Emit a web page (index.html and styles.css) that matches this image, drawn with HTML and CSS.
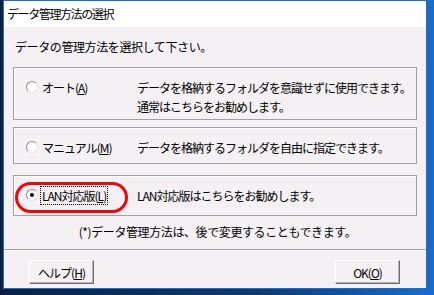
FILE: index.html
```html
<!DOCTYPE html>
<html lang="ja">
<head>
	<meta charset="UTF-8">
	<title>データ管理方法の選択</title>
	<link rel="stylesheet" href="styles.css">
</head>
<body>
	<div class="dialog">
		<header class="titlebar">データ管理方法の選択</header>
		<main class="content">
			<p class="prompt">データの管理方法を選択して下さい。</p>
			<div class="group group-auto">
				<div class="opt">
					<span class="radio"></span>
					<span class="label">オート(<u>A</u>)</span>
					<span class="desc">データを格納するフォルダを意識せずに使用できます。<br>通常はこちらをお勧めします。</span>
				</div>
			</div>
			<div class="group group-manual">
				<div class="opt">
					<span class="radio"></span>
					<span class="label">マニュアル(<u>M</u>)</span>
					<span class="desc">データを格納するフォルダを自由に指定できます。</span>
				</div>
			</div>
			<div class="group group-lan">
				<div class="opt">
					<span class="radio checked"></span>
					<span class="label"><span class="focus">LAN対応版(<u>L</u>)</span></span>
					<span class="desc">LAN対応版はこちらをお勧めします。</span>
				</div>
				<div class="mark"></div>
			</div>
			<p class="note">(*)データ管理方法は、後で変更することもできます。</p>
		</main>
		<footer class="buttons">
			<button type="button" class="btn">ヘルプ(<u>H</u>)</button>
			<button type="button" class="btn">OK(<u>O</u>)</button>
		</footer>
	</div>
</body>
</html>
```

FILE: styles.css
```css
body {
	margin: 0;
	height: 295px;
	display: flex;
	align-items: flex-start;
	padding-left: 3px;
	background: linear-gradient(to right, #0a2240 0%, #0f3a6e 60%, #1a6ccc 100%);
	font-family: "Noto Sans CJK JP", sans-serif;
	font-size: 12px;
	letter-spacing: -1px;
	color: #000;
}

.dialog {
	width: 424px;
	height: 289px;
	box-sizing: border-box;
	border: 1px solid #1f6fc4;
	display: flex;
	flex-direction: column;
	background: #f4f0f4;
}

.titlebar {
	height: 26px;
	line-height: 26px;
	padding-left: 3px;
	background: #fff;
	letter-spacing: -1.4px;
}

.content {
	height: 222px;
	box-sizing: border-box;
	padding: 12px 9px 0 9px;
}

.prompt {
	margin: 0 0 12px 2px;
	line-height: 16px;
	letter-spacing: -0.4px;
}

.group {
	position: relative;
	box-sizing: border-box;
	border: 1px solid #a0a0a0;
	box-shadow: inset 1px 1px #fff;
	padding: 10px 0 0 12px;
}

.group-auto {height: 53px;}
.group-manual {height: 37px; margin-top: 7px;}
.group-lan {height: 41px; margin-top: 11px;}

.opt {
	display: grid;
	grid-template-columns: 12px 91px 1fr;
	column-gap: 4px;
	line-height: 19px;
	align-items: start;
}

.radio {
	width: 12px;
	height: 12px;
	margin-top: 3px;
	box-sizing: border-box;
	border-radius: 50%;
	border: 1px solid;
	border-color: #8c8c8c #e2e2e2 #e2e2e2 #8c8c8c;
	background: #fff;
	display: flex;
	align-items: center;
	justify-content: center;
}

.radio.checked::after {
	content: "";
	width: 4px;
	height: 4px;
	border-radius: 50%;
	background: #000;
}

.focus {
	outline: 1px dotted #000;
	outline-offset: 0;
	padding: 0 1px;
	margin-left: -1px;
}

.mark {
	position: absolute;
	left: 1px;
	top: 6px;
	width: 113px;
	height: 31px;
	box-sizing: border-box;
	border: 3px solid #e8080d;
	border-radius: 16px;
}

.note {
	margin: 8px 0 0;
	line-height: 16px;
	text-align: center;
	letter-spacing: -0.4px;
	padding-left: 5px;
}

.buttons {
	flex: 1;
	border-top: 1px solid #a0a0a0;
	box-shadow: inset 0 1px #fff;
	display: flex;
	justify-content: space-between;
	align-items: flex-start;
	padding: 10px 26px 0 25px;
}

.btn {
	width: 65px;
	height: 24px;
	padding: 0;
	font: inherit;
	letter-spacing: inherit;
	color: #000;
	background: #f4f0f4;
	border: 1px solid;
	border-color: #fff #6e6e6e #6e6e6e #fff;
	box-shadow: inset -1px -1px #b4b4b4;
}
```
